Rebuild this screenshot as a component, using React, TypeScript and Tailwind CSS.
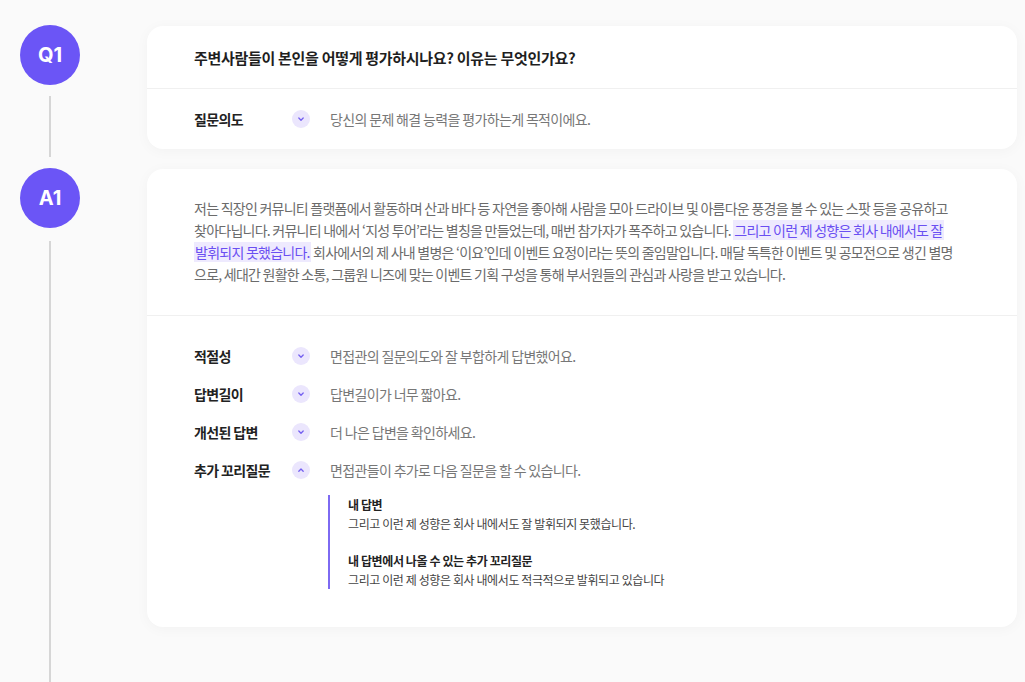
import React from "react";

interface Feedback {
  label: string;
  text: string;
  open?: boolean;
}

const FONT = "font-['Pretendard','Noto_Sans_CJK_KR','Noto_Sans',sans-serif]";

const Chevron: React.FC<{ up?: boolean }> = ({ up }) => (
  <span className="w-[18px] h-[18px] rounded-full bg-[#ebe6fd] flex items-center justify-center shrink-0">
    <svg width="8" height="8" viewBox="0 0 8 8" fill="none">
      <path
        d={up ? "M1.8 5.2 4 3 6.2 5.2" : "M1.8 3 4 5.2 6.2 3"}
        stroke="#7460f0"
        strokeWidth="1.3"
        strokeLinecap="round"
        strokeLinejoin="round"
      />
    </svg>
  </span>
);

const Badge: React.FC<{ label: string }> = ({ label }) => (
  <div className="w-[60px] h-[60px] rounded-full bg-[#6b55f6] text-white text-[20px] font-bold flex items-center justify-center shrink-0 font-['Inter','Liberation_Sans',sans-serif]">
    {label}
  </div>
);

const Row: React.FC<Feedback> = ({ label, text, open }) => (
  <div className="flex items-center h-[22px] tracking-[-0.65px]">
    <span className="w-[98px] text-[14px] font-bold text-[#222]">{label}</span>
    <Chevron up={open} />
    <span className="ml-5 text-[14px] text-[#777]">{text}</span>
  </div>
);

const App: React.FC = () => {
  const rows: Feedback[] = [
    { label: "적절성", text: "면접관의 질문의도와 잘 부합하게 답변했어요." },
    { label: "답변길이", text: "답변길이가 너무 짧아요." },
    { label: "개선된 답변", text: "더 나은 답변을 확인하세요." },
    { label: "추가 꼬리질문", text: "면접관들이 추가로 다음 질문을 할 수 있습니다.", open: true },
  ];

  return (
    <div className={`min-h-screen bg-[#fafafa] pl-5 pr-2 pt-[25px] flex flex-col ${FONT}`}>
      {/* 질문 */}
      <div className="flex">
        <div className="w-[60px] flex flex-col items-center">
          <Badge label="Q1" />
          <div className="w-[2px] flex-1 bg-[#d6d6d6] my-[11px]" />
        </div>
        <div className="flex-1 ml-[67px] mt-px mb-[19px] bg-white rounded-2xl shadow-[0_2px_14px_rgba(0,0,0,0.035)]">
          <div className="px-[47px] h-[63px] flex items-center border-b border-[#f0f0f0]">
            <h2 className="text-[15px] font-bold text-[#1f1f1f] tracking-[-0.3px] mt-[2px]">
              주변사람들이 본인을 어떻게 평가하시나요? 이유는 무엇인가요?
            </h2>
          </div>
          <div className="px-[47px] py-[19px]">
            <Row label="질문의도" text="당신의 문제 해결 능력을 평가하는게 목적이에요." />
          </div>
        </div>
      </div>

      {/* 답변 */}
      <div className="flex flex-1">
        <div className="w-[60px] flex flex-col items-center">
          <Badge label="A1" />
          <div className="w-[2px] flex-1 bg-[#d6d6d6] mt-[13px]" />
        </div>
        <div className="flex-1 ml-[67px] mt-px mb-[56px] self-start bg-white rounded-2xl shadow-[0_2px_14px_rgba(0,0,0,0.035)]">
          <p className="pl-[47px] pr-[60px] pt-[28px] pb-[30px] text-[14px] leading-[22px] text-[#6b6b6b] tracking-[-0.75px] border-b border-[#f0f0f0]">
            저는 직장인 커뮤니티 플랫폼에서 활동하며 산과 바다 등 자연을 좋아해 사람을 모아 드라이브 및 아름다운 풍경을 볼 수 있는 스팟 등을 공유하고
            찾아다닙니다. 커뮤니티 내에서 ‘지성 투어’라는 별칭을 만들었는데, 매번 참가자가 폭주하고 있습니다.{" "}
            <span className="bg-[#eeeafe] text-[#6a4ff2] px-px box-decoration-clone">
              그리고 이런 제 성향은 회사 내에서도 잘 발휘되지 못했습니다.
            </span>{" "}
            회사에서의 제 사내 별병은 ‘이요’인데 이벤트 요정이라는 뜻의 줄임말입니다. 매달 독특한 이벤트 및 공모전으로 생긴 별명으로, 세대간 원활한 소통,
            그룹원 니즈에 맞는 이벤트 기획 구성을 통해 부서원들의 관심과 사랑을 받고 있습니다.
          </p>
          <div className="px-[47px] pt-[29px] pb-[38px]">
            <div className="flex flex-col gap-4">
              {rows.map((r) => (
                <Row key={r.label} {...r} />
              ))}
            </div>
            <div className="mt-4 ml-[134px] border-l-2 border-[#7d6af2] pl-[18px] text-[12px] leading-[19px] tracking-[-0.4px]">
              <p className="font-bold text-[#222] -mt-[2px]">내 답변</p>
              <p className="text-[#444]">그리고 이런 제 성향은 회사 내에서도 잘 발휘되지 못했습니다.</p>
              <p className="font-bold text-[#222] mt-[18px]">내 답변에서 나올 수 있는 추가 꼬리질문</p>
              <p className="text-[#444]">그리고 이런 제 성향은 회사 내에서도 적극적으로 발휘되고 있습니다</p>
            </div>
          </div>
        </div>
      </div>
    </div>
  );
};

export default App;
